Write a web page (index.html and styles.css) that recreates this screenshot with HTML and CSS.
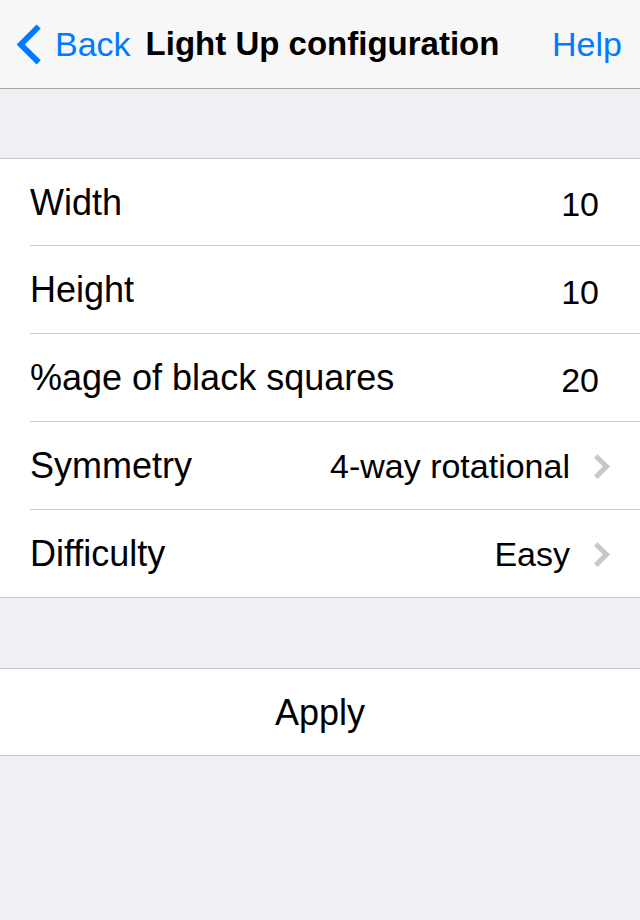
FILE: index.html
```html
<!DOCTYPE html>
<html lang="en">
<head>
<meta charset="utf-8">
<meta name="viewport" content="width=device-width, initial-scale=1">
<title>Light Up configuration</title>
<link rel="stylesheet" href="styles.css">
</head>
<body>
<header class="navbar">
  <a class="nav-link back" href="#back">
    <svg class="back-icon" viewBox="0 0 25 42" aria-hidden="true"><path d="M0.6 21.4 L20.6 1.4 L24.7 5.5 L8.8 21.4 L24.7 37.3 L20.6 41.4 Z" fill="currentColor"/></svg>
    Back
  </a>
  <h1 class="title">Light Up configuration</h1>
  <a class="nav-link help" href="#help">Help</a>
</header>
<form class="settings">
  <div class="group">
    <div class="row">
      <label class="name" for="width">Width</label>
      <input class="number" id="width" type="text" inputmode="numeric" value="10">
    </div>
    <div class="row">
      <label class="name" for="height">Height</label>
      <input class="number" id="height" type="text" inputmode="numeric" value="10">
    </div>
    <div class="row">
      <label class="name" for="black">%age of black squares</label>
      <input class="number" id="black" type="text" inputmode="numeric" value="20">
    </div>
    <button class="row" type="button">
      <span class="name">Symmetry</span>
      <span class="choice">4-way rotational</span>
      <svg class="chevron" viewBox="0 0 16 28" aria-hidden="true"><path d="M16 14.6 L3.6 2.2 L0 5.8 L8.8 14.6 L0 23.4 L3.6 27 Z" fill="currentColor"/></svg>
    </button>
    <button class="row" type="button">
      <span class="name">Difficulty</span>
      <span class="choice">Easy</span>
      <svg class="chevron" viewBox="0 0 16 28" aria-hidden="true"><path d="M16 14.6 L3.6 2.2 L0 5.8 L8.8 14.6 L0 23.4 L3.6 27 Z" fill="currentColor"/></svg>
    </button>
  </div>
  <div class="group">
    <button class="apply" type="submit">Apply</button>
  </div>
</form>
</body>
</html>
```
FILE: styles.css
```css
* {
  box-sizing: border-box;
}

body {
  margin: 0;
  background: #efeff4;
  color: #000;
  font-family: "Liberation Sans", Arial, sans-serif;
  font-size: 34px;
  line-height: 40px;
}

.navbar {
  display: flex;
  align-items: center;
  gap: 15px;
  height: 89px;
  padding: 0 18px 0 16px;
  background: #f7f7f7;
  border-bottom: 1px solid #a7a7ab;
}

.nav-link {
  color: #007aff;
  text-decoration: none;
}

.back {
  display: flex;
  align-items: center;
  gap: 14px;
}

.back-icon {
  width: 25px;
  height: 42px;
}

.title {
  margin: 0;
  font-size: 33px;
  line-height: 42px;
  font-weight: bold;
  white-space: nowrap;
}

.help {
  margin-left: auto;
}

.settings {
  display: grid;
  gap: 70px;
  padding: 69px 0;
}

.group {
  background: #fff;
  border: solid #c8c7cc;
  border-width: 1px 0;
}

.row {
  display: flex;
  align-items: center;
  width: calc(100% - 30px);
  height: 88px;
  margin: 0 0 0 30px;
  padding: 1px 30px 0 0;
  background: none;
  border: 0;
  border-bottom: 1px solid #c8c7cc;
  color: inherit;
  font: inherit;
  text-align: left;
}

.row:first-child {
  height: 87px;
}

.row:last-child {
  height: 87px;
  border-bottom: 0;
}

.name {
  flex: 1;
  font-size: 36px;
  white-space: nowrap;
}

.number {
  width: 120px;
  height: 80px;
  margin: 0;
  padding: 4px 11px 0 0;
  background: none;
  border: 0;
  color: inherit;
  font: inherit;
  text-align: right;
}

.choice {
  margin-right: 24px;
}

.chevron {
  width: 16px;
  height: 28px;
  color: #c7c7cc;
}

.apply {
  display: block;
  width: 100%;
  height: 86px;
  padding: 1px 0 0;
  background: none;
  border: 0;
  color: inherit;
  font: inherit;
  font-size: 36px;
}
```
